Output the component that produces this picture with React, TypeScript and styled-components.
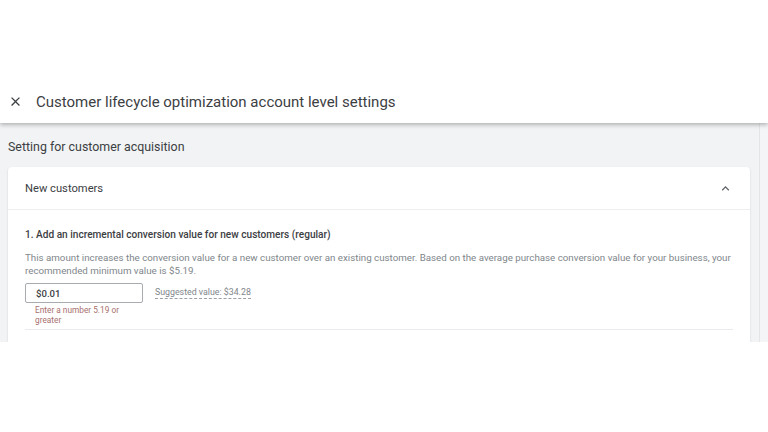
import React from "react";
import styled, { createGlobalStyle } from "styled-components";

const GlobalStyle = createGlobalStyle`
  html, body {
    margin: 0;
    padding: 0;
    background: #ffffff;
    font-family: Roboto, "Liberation Sans", Arial, sans-serif;
  }
`;

const Page = styled.div`
  width: 768px;
  height: 432px;
  display: flex;
  flex-direction: column;
  background: #ffffff;
  overflow: hidden;
`;

const TopSpace = styled.div`
  height: 80px;
  flex-shrink: 0;
`;

const Frame = styled.div`
  height: 262px;
  display: flex;
  flex-direction: column;
  overflow: hidden;
`;

const Header = styled.header`
  position: relative;
  z-index: 1;
  height: 43px;
  flex-shrink: 0;
  display: flex;
  align-items: center;
  padding-left: 6px;
  background: #ffffff;
  box-shadow: 0 2px 4px rgba(60, 64, 67, 0.35);
`;

const CloseButton = styled.button`
  width: 18px;
  height: 18px;
  padding: 0;
  border: none;
  background: none;
  display: flex;
  align-items: center;
  justify-content: center;
  color: #3c4043;
`;

const Title = styled.h1`
  margin: 0 0 0 12px;
  font-size: 15px;
  font-weight: 400;
  color: #3c4043;
  white-space: nowrap;
`;

const Body = styled.div`
  flex: 1;
  display: flex;
  background: #f1f3f4;
  min-height: 0;
`;

const Content = styled.div`
  flex: 1;
  display: flex;
  flex-direction: column;
  padding: 16px 9px 0 8px;
  min-width: 0;
`;

const ScrollTrack = styled.div`
  width: 8px;
  border-left: 1px solid #e3e5e7;
  background: #f4f5f6;
`;

const SectionTitle = styled.h2`
  margin: 0;
  font-size: 12.4px;
  line-height: 16px;
  font-weight: 400;
  color: #3c4043;
`;

const Card = styled.section`
  flex: 1;
  margin-top: 12px;
  background: #ffffff;
  border-radius: 4px 4px 0 0;
  box-shadow: 0 1px 2px rgba(60, 64, 67, 0.2);
`;

const CardHeader = styled.div`
  height: 42px;
  display: flex;
  align-items: center;
  justify-content: space-between;
  padding: 0 17px;
  border-bottom: 1px solid #eceef0;
`;

const CardTitle = styled.span`
  font-size: 11.2px;
  color: #3c4043;
`;

const CardBody = styled.div`
  padding: 18px 12px 0 17px;
`;

const Question = styled.div`
  font-size: 10.1px;
  line-height: 13px;
  font-weight: 500;
  color: #3c4043;
`;

const Description = styled.p`
  margin: 10px 0 0;
  font-size: 9.75px;
  line-height: 13px;
  color: #80868b;
`;

const InputRow = styled.div`
  display: flex;
  align-items: center;
  margin-top: 6px;
`;

const ValueInput = styled.div`
  width: 118px;
  height: 20px;
  box-sizing: border-box;
  border: 1px solid #a8acb0;
  border-radius: 2px;
  display: flex;
  align-items: center;
  padding-left: 10px;
  font-size: 9.6px;
  font-weight: 500;
  color: #3c4043;
`;

const Suggestion = styled.span`
  margin-left: 12px;
  font-size: 8.8px;
  color: #80868b;
  border-bottom: 1px dashed #9aa0a6;
  line-height: 11px;
`;

const ErrorText = styled.div`
  width: 92px;
  margin-top: 2px;
  padding-left: 10px;
  font-size: 8.3px;
  line-height: 10px;
  color: #a7706d;
`;

const Divider = styled.hr`
  margin: 4px 5px 0 0;
  border: none;
  border-top: 1px solid #e8eaed;
`;

const CloseIcon = () => (
  <svg width="15" height="15" viewBox="0 0 24 24" fill="currentColor">
    <path d="M19 6.41 17.59 5 12 10.59 6.41 5 5 6.41 10.59 12 5 17.59 6.41 19 12 13.41 17.59 19 19 17.59 13.41 12z" />
  </svg>
);

const ChevronUp = () => (
  <svg width="15" height="15" viewBox="0 0 24 24" fill="#5f6368">
    <path d="M7.41 15.41 12 10.83l4.59 4.58L18 14l-6-6-6 6z" />
  </svg>
);

export default function App() {
  return (
    <Page>
      <GlobalStyle />
      <TopSpace />
      <Frame>
        <Header>
          <CloseButton aria-label="Close">
            <CloseIcon />
          </CloseButton>
          <Title>Customer lifecycle optimization account level settings</Title>
        </Header>
        <Body>
          <Content>
            <SectionTitle>Setting for customer acquisition</SectionTitle>
            <Card>
              <CardHeader>
                <CardTitle>New customers</CardTitle>
                <ChevronUp />
              </CardHeader>
              <CardBody>
                <Question>
                  1. Add an incremental conversion value for new customers (regular)
                </Question>
                <Description>
                  This amount increases the conversion value for a new customer over an
                  existing customer. Based on the average purchase conversion value for
                  your business, your recommended minimum value is $5.19.
                </Description>
                <InputRow>
                  <ValueInput>$0.01</ValueInput>
                  <Suggestion>Suggested value: $34.28</Suggestion>
                </InputRow>
                <ErrorText>Enter a number 5.19 or greater</ErrorText>
                <Divider />
              </CardBody>
            </Card>
          </Content>
          <ScrollTrack />
        </Body>
      </Frame>
    </Page>
  );
}
